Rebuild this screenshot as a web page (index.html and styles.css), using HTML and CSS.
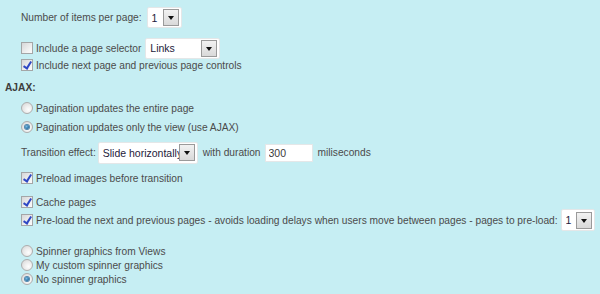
FILE: index.html
```html
<!DOCTYPE html>
<html lang="en">
<head>
    <meta charset="UTF-8">
    <meta name="viewport" content="width=device-width, initial-scale=1.0">
    <title>Pagination settings</title>
    <link rel="stylesheet" href="styles.css">
</head>
<body>
    <form name="pager_form" class="pager-form" id="pager_form">
        <div class="form-row row-items">
            <label for="items_per_page">Number of items per page:</label>
            <span class="select-box w-items">
                <select name="items_per_page" id="items_per_page"><option>1</option><option>5</option><option>10</option></select>
                <span class="select-btn"></span>
            </span>
        </div>
        <div class="form-row row-selector">
            <label><input type="checkbox" name="page_selector" />Include a page selector</label>
            <span class="select-box w-links">
                <select name="selector_type"><option>Links</option><option>Dropdown</option></select>
                <span class="select-btn"></span>
            </span>
        </div>
        <div class="form-row row-line">
            <label><input type="checkbox" name="next_prev" checked />Include next page and previous page controls</label>
        </div>

        <div class="section-title">AJAX:</div>

        <div class="form-row row-line row-radio1">
            <label><input type="radio" name="ajax" value="0" />Pagination updates the entire page</label>
        </div>
        <div class="form-row row-line row-radio2">
            <label><input type="radio" name="ajax" value="1" checked />Pagination updates only the view (use AJAX)</label>
        </div>
        <div class="form-row row-transition">
            <label for="transition">Transition effect:</label>
            <span class="select-box w-effect">
                <select name="transition" id="transition"><option>Slide horizontally</option><option>Fade</option></select>
                <span class="select-btn"></span>
            </span>
            <label for="duration" class="after-select">with duration</label>
            <input type="text" name="duration" id="duration" class="text-input" value="300" />
            <span class="unit">miliseconds</span>
        </div>
        <div class="form-row row-line row-preload">
            <label><input type="checkbox" name="preload_images" checked />Preload images before transition</label>
        </div>
        <div class="form-row row-line row-cache">
            <label><input type="checkbox" name="cache_pages" checked />Cache pages</label>
        </div>
        <div class="form-row row-preload-pages">
            <label><input type="checkbox" name="preload_pages" checked />Pre-load the next and previous pages - avoids loading delays when users move between pages - pages to pre-load:</label>
            <span class="select-box w-count">
                <select name="preload_count"><option>1</option><option>2</option><option>3</option></select>
                <span class="select-btn"></span>
            </span>
        </div>

        <div class="form-row row-spin row-spin-first">
            <label><input type="radio" name="spinner" value="views" />Spinner graphics from Views</label>
        </div>
        <div class="form-row row-spin">
            <label><input type="radio" name="spinner" value="custom" />My custom spinner graphics</label>
        </div>
        <div class="form-row row-spin">
            <label><input type="radio" name="spinner" value="none" checked />No spinner graphics</label>
        </div>
    </form>
</body>
</html>
```

FILE: styles.css
```css
html, body {
    margin: 0;
    background: #c6eef3;
}
body {
    font-family: "Liberation Sans", Arial, sans-serif;
    font-size: 10.2px;
    color: #4b4b4b;
}
.pager-form {
    padding: 7px 5px 0;
}
.form-row {
    display: flex;
    align-items: center;
    padding-left: 16px;
    white-space: nowrap;
}
.form-row label {
    display: flex;
    align-items: center;
}
.row-items {
    height: 21px;
}
.row-selector {
    height: 20px;
    margin-top: 10px;
}
.row-line {
    height: 14px;
}
.section-title {
    height: 14px;
    line-height: 14px;
    margin-top: 9px;
    font-weight: bold;
    color: #3d3d3d;
}
.row-radio1 {
    margin-top: 6px;
}
.row-radio2 {
    margin-top: 5px;
}
.row-transition {
    height: 21px;
    margin-top: 8px;
}
.row-preload {
    margin-top: 8px;
}
.row-cache {
    margin-top: 10px;
}
.row-preload-pages {
    height: 22px;
}
.row-spin {
    height: 14px;
}
.row-spin-first {
    margin-top: 13px;
}

/* checkbox / radio */
input[type=checkbox],
input[type=radio] {
    -webkit-appearance: none;
    appearance: none;
    position: relative;
    width: 12px;
    height: 12px;
    margin: 0 3px 0 0;
    border: 1px solid #a4a6a7;
    background: linear-gradient(135deg, #d6d7d8 0%, #f3f3f3 70%, #fbfbfb 100%);
    flex: none;
}
input[type=checkbox]:checked::after {
    content: '';
    position: absolute;
    left: 3px;
    top: 0px;
    width: 3px;
    height: 7px;
    border: solid #2f48c4;
    border-width: 0 2px 2px 0;
    transform: rotate(32deg);
}
input[type=radio] {
    border-radius: 50%;
    border-color: #adadad;
    background: radial-gradient(circle at 65% 65%, #fdfdfd 0%, #eeeeee 40%, #d3d3d3 100%);
}
input[type=radio]:checked::after {
    content: '';
    position: absolute;
    left: 3px;
    top: 3px;
    width: 4px;
    height: 4px;
    border-radius: 50%;
    background: radial-gradient(circle at 40% 40%, #7fc0e6 0%, #1f6fa6 60%, #12466e 100%);
    box-shadow: 0 0 0 1px #4f87ad;
}

/* select */
.select-box {
    display: inline-flex;
    align-items: center;
    margin-left: 5px;
    height: 21px;
    box-sizing: border-box;
    background: #fff;
    border: 1px solid #e4e7e8;
    border-radius: 2px;
    padding: 0 2px 0 0;
}
.select-box select {
    -webkit-appearance: none;
    appearance: none;
    border: 0;
    outline: 0;
    background: transparent;
    font-family: "Liberation Sans", Arial, sans-serif;
    font-size: 10.5px;
    color: #1d1a3a;
    padding: 0 0 0 4px;
    margin: 0;
    flex: 1;
    min-width: 0;
    height: 100%;
}
.select-btn {
    display: flex;
    align-items: center;
    justify-content: center;
    width: 14px;
    height: 15px;
    border: 1px solid #9a9a9a;
    background: linear-gradient(#f2f2f2, #d9d9d9);
    flex: none;
}
.select-btn::after {
    content: '';
    border-style: solid;
    border-width: 4px 3.5px 0;
    border-color: #111 transparent transparent;
    margin-top: 1px;
}
.w-items {
    width: 35px;
}
.w-links {
    width: 75px;
    margin-left: 4px;
}
.w-effect {
    width: 100px;
    height: 22px;
    margin-left: 2px;
}
.w-count {
    width: 38px;
    height: 22px;
    margin-left: 3px;
}
.after-select {
    margin-left: 5px;
}
.text-input {
    width: 48px;
    height: 18px;
    box-sizing: border-box;
    margin: 0 0 0 4px;
    padding: 0 0 0 3px;
    border: 1px solid #e4e7e8;
    background: #fff;
    font-family: "Liberation Sans", Arial, sans-serif;
    font-size: 10.5px;
    color: #3a3a3a;
    outline: 0;
}
.unit {
    margin-left: 5px;
}
```
